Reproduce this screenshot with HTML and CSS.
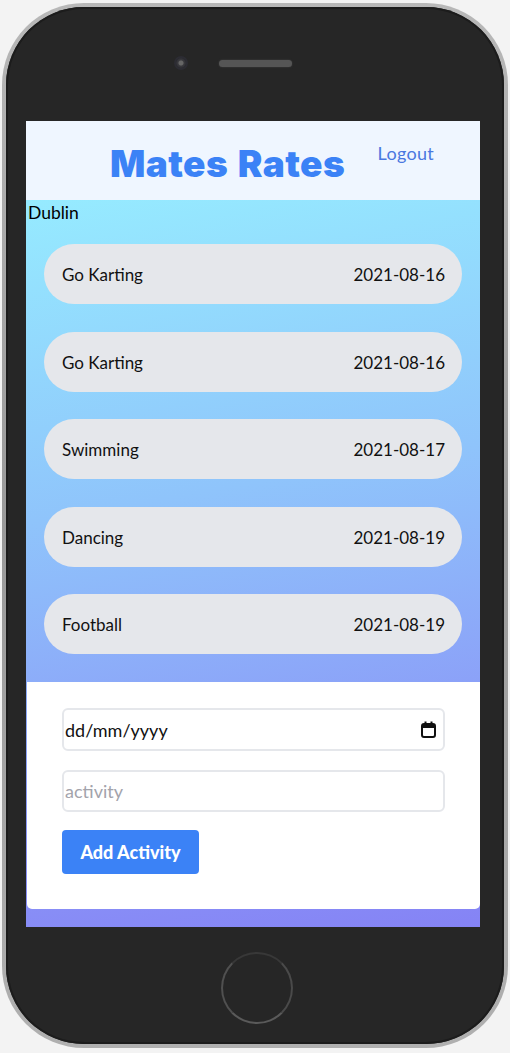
FILE: index.html
```html
<!DOCTYPE html>
<html lang="en">
<head>
<meta charset="utf-8">
<title>Mates Rates</title>
<link rel="stylesheet" href="styles.css">
</head>
<body>
<div class="phone">
  <div class="phone-body">
    <div class="phone-top">
      <span class="camera"></span>
      <span class="speaker"></span>
    </div>
    <div class="screen">
      <header class="app-header">
        <h1 class="title">Mates Rates</h1>
        <a class="logout" href="#">Logout</a>
      </header>
      <main class="content">
        <div class="city">Dublin</div>
        <ul class="activities">
          <li class="activity"><span>Go Karting</span><span>2021-08-16</span></li>
          <li class="activity"><span>Go Karting</span><span>2021-08-16</span></li>
          <li class="activity"><span>Swimming</span><span>2021-08-17</span></li>
          <li class="activity"><span>Dancing</span><span>2021-08-19</span></li>
          <li class="activity"><span>Football</span><span>2021-08-19</span></li>
        </ul>
        <form class="card">
          <label class="field date-field">
            <input class="field-input date-input" type="text" placeholder="dd/mm/yyyy">
            <svg class="cal-icon" width="15" height="17" viewBox="0 0 15 17" aria-hidden="true">
              <rect x="1" y="3" width="13" height="13" rx="2" fill="none" stroke="#111" stroke-width="2"/>
              <rect x="1" y="3" width="13" height="4" fill="#111"/>
              <rect x="3.5" y="0.5" width="2" height="3" fill="#111"/>
              <rect x="9.5" y="0.5" width="2" height="3" fill="#111"/>
            </svg>
          </label>
          <label class="field">
            <input class="field-input" type="text" placeholder="activity">
          </label>
          <div class="actions">
            <button class="btn" type="button">Add Activity</button>
          </div>
        </form>
      </main>
    </div>
    <div class="phone-bottom">
      <span class="home"></span>
    </div>
  </div>
</div>
</body>
</html>
```

FILE: styles.css
```css
html, body {
  margin: 0;
  padding: 0;
}
body {
  background: #f3f3f3;
  font-family: Lato, "Liberation Sans", sans-serif;
  padding: 3px 2px 0 2px;
}
.phone {
  width: 506px;
  height: 1045px;
  box-sizing: border-box;
  padding: 4px;
  border-radius: 82px;
  background: linear-gradient(180deg, #b8b8b8 0%, #9a9a9a 50%, #b0b0b0 100%);
}
.phone-body {
  height: 100%;
  box-sizing: border-box;
  border-radius: 78px;
  background: #262626;
  box-shadow: inset 0 0 0 2px #1c1c1c;
  display: flex;
  flex-direction: column;
}
.phone-top {
  height: 114px;
  display: flex;
  align-items: center;
  padding-left: 170px;
  padding-bottom: 2px;
  box-sizing: border-box;
  gap: 33px;
}
.camera {
  width: 10px;
  height: 10px;
  border-radius: 50%;
  background: radial-gradient(circle, #666 0 2px, #3a3a3e 3px, #2e2e34 5px);
  box-shadow: 0 0 0 2px #2c2c33;
}
.speaker {
  width: 73px;
  height: 7px;
  border-radius: 4px;
  background: #555;
  box-shadow: 0 0 2px #444;
}
.screen {
  margin-left: 20px;
  width: 454px;
  height: 806px;
  display: flex;
  flex-direction: column;
  overflow: hidden;
}
.app-header {
  height: 79px;
  flex: none;
  background: #eff6ff;
  display: flex;
  align-items: flex-start;
  padding-left: 84px;
  padding-right: 46px;
  box-sizing: border-box;
}
.title {
  margin: 18px 0 0 0;
  font-family: Inter, Lato, sans-serif;
  font-size: 37px;
  line-height: 50px;
  font-weight: 900;
  color: #3b82f6;
  letter-spacing: 0.4px;
  word-spacing: 2px;
}
.logout {
  margin: 20px 0 0 auto;
  font-size: 18px;
  line-height: 24px;
  color: #4a78e0;
  text-decoration: none;
  letter-spacing: 0.3px;
}
.content {
  flex: 1;
  background: linear-gradient(170deg, #96ebff 0%, #8fc4fb 40%, #8a95f7 80%, #8583f5 100%);
  display: flex;
  flex-direction: column;
}
.city {
  font-size: 17.5px;
  line-height: 24px;
  color: #000;
  padding: 1px 0 0 2px;
}
.activities {
  list-style: none;
  margin: 19px 18px 0 18px;
  padding: 0;
  display: flex;
  flex-direction: column;
  gap: 27.5px;
}
.activity {
  height: 60px;
  border-radius: 30px;
  background: #e5e7eb;
  display: flex;
  align-items: center;
  justify-content: space-between;
  padding: 1px 17px 0 18px;
  box-sizing: border-box;
  font-size: 17px;
  color: #111;
}
.card {
  margin: 28px 0 18px 1px;
  background: #fff;
  border-radius: 0 0 5px 5px;
  padding: 26px 35px 35px 35px;
  display: flex;
  flex-direction: column;
  gap: 19px;
}
.field {
  display: flex;
  align-items: center;
  height: 43px;
  box-sizing: border-box;
  border: 2px solid #e5e7eb;
  border-radius: 6px;
  background: #fff;
}
.field + .field {
  height: 42px;
}
.field-input {
  flex: 1;
  min-width: 0;
  border: 0;
  outline: none;
  background: transparent;
  font-family: Lato, "Liberation Sans", sans-serif;
  font-size: 18px;
  padding: 0 0 0 1px;
  color: #111;
}
.field-input::placeholder {
  color: #a3a3ab;
}
.date-input::placeholder {
  color: #111;
}
.cal-icon {
  margin-right: 7px;
  flex: none;
}
.actions {
  display: flex;
  margin-top: -1px;
}
.btn {
  height: 44px;
  width: 137px;
  border: 0;
  border-radius: 4px;
  background: #3b82f6;
  color: #fff;
  font-family: Lato, "Liberation Sans", sans-serif;
  font-weight: 900;
  font-size: 18px;
  cursor: pointer;
}
.phone-bottom {
  flex: 1;
  display: flex;
  justify-content: center;
  padding-top: 25px;
  padding-left: 3px;
}
.home {
  width: 68px;
  height: 68px;
  border-radius: 50%;
  border: 2px solid #4a4a4a;
  border-top-color: #383838;
  border-left-color: #505050;
  border-bottom-color: #5a5a5a;
}
```
